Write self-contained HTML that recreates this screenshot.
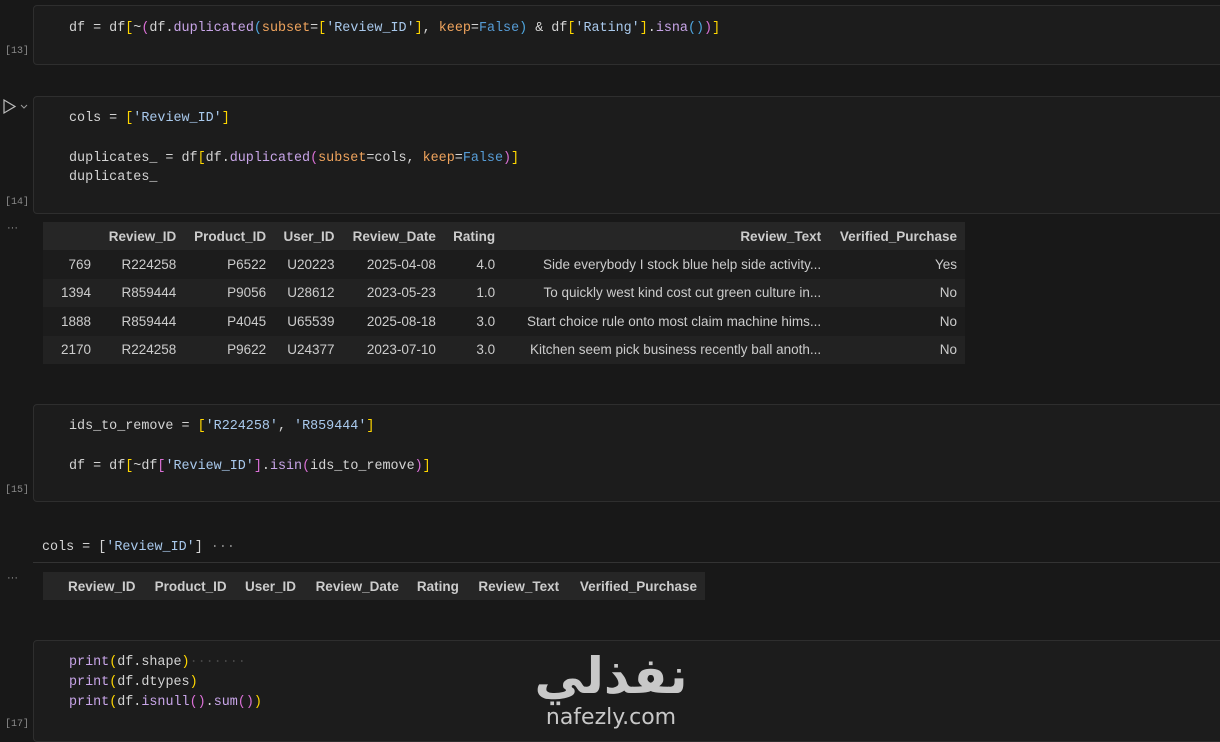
<!DOCTYPE html>
<html><head><meta charset="utf-8"><style>
body{margin:0;width:1220px;height:732px;background:#181818;overflow:hidden;position:relative;font-family:"Liberation Mono",monospace;}
.cell{position:absolute;left:33px;right:-4px;border:1px solid #2e2e2e;border-radius:4px;background:#1c1c1c;}
.code{position:absolute;left:69px;font-size:13.4px;color:#d4d4d4;white-space:pre;line-height:20px;}
.n{position:absolute;left:5px;font-size:10px;color:#8a8a8a;}
.f{color:#c8a5e8}.s{color:#a9c9ec}.k{color:#f0a45d}.b{color:#569cd6}.y{color:#ffd700}.p{color:#da70d6}.q{color:#4fa7e0}
table{position:absolute;border-collapse:collapse;font-family:"Liberation Sans Narrow","Liberation Sans",sans-serif;font-size:13.5px;color:#cccccc;}
td,th{padding:0 8px;text-align:right;white-space:nowrap;}
th{font-weight:bold;height:28px;}
td{height:28.5px;}
.dots{position:absolute;left:7px;color:#999;font-size:11px;font-family:"Liberation Sans",sans-serif;}
</style></head><body>
<div class="cell" style="top:5px;height:58px"></div>
<div class="code" style="top:19px">df = df<span class="y">[</span>~<span class="p">(</span>df.<span class="f">duplicated</span><span class="q">(</span><span class="k">subset</span>=<span class="y">[</span><span class="s">'Review_ID'</span><span class="y">]</span>, <span class="k">keep</span>=<span class="b">False</span><span class="q">)</span> &amp; df<span class="y">[</span><span class="s">'Rating'</span><span class="y">]</span>.<span class="f">isna</span><span class="q">()</span><span class="p">)</span><span class="y">]</span></div>
<div class="n" style="top:46px">[13]</div>

<svg style="position:absolute;left:2px;top:99px" width="30" height="16"><path d="M2 1 L13 7.5 L2 14 Z" fill="none" stroke="#bbb" stroke-width="1.2"/><path d="M19 6 L22 9 L25 6" fill="none" stroke="#999" stroke-width="1"/></svg>
<div class="cell" style="top:96px;height:116px"></div>
<div class="code" style="top:109px">cols = <span class="y">[</span><span class="s">'Review_ID'</span><span class="y">]</span></div>
<div class="code" style="top:149px">duplicates_ = df<span class="y">[</span>df.<span class="f">duplicated</span><span class="p">(</span><span class="k">subset</span>=cols, <span class="k">keep</span>=<span class="b">False</span><span class="p">)</span><span class="y">]</span></div>
<div class="code" style="top:168px">duplicates_</div>
<div class="n" style="top:197px">[14]</div>

<div class="dots" style="top:222px">···</div>
<table style="left:43px;top:222px;width:922px">
<tr style="background:#262626"><th style="width:40px"></th><th>Review_ID</th><th>Product_ID</th><th>User_ID</th><th>Review_Date</th><th>Rating</th><th style="width:310px">Review_Text</th><th>Verified_Purchase</th></tr>
<tr style="background:#1c1c1c"><td>769</td><td>R224258</td><td>P6522</td><td>U20223</td><td>2025-04-08</td><td>4.0</td><td>Side everybody I stock blue help side activity...</td><td>Yes</td></tr>
<tr style="background:#222"><td>1394</td><td>R859444</td><td>P9056</td><td>U28612</td><td>2023-05-23</td><td>1.0</td><td>To quickly west kind cost cut green culture in...</td><td>No</td></tr>
<tr style="background:#1c1c1c"><td>1888</td><td>R859444</td><td>P4045</td><td>U65539</td><td>2025-08-18</td><td>3.0</td><td>Start choice rule onto most claim machine hims...</td><td>No</td></tr>
<tr style="background:#222"><td>2170</td><td>R224258</td><td>P9622</td><td>U24377</td><td>2023-07-10</td><td>3.0</td><td>Kitchen seem pick business recently ball anoth...</td><td>No</td></tr>
</table>

<div class="cell" style="top:404px;height:96px"></div>
<div class="code" style="top:417px">ids_to_remove = <span class="y">[</span><span class="s">'R224258'</span>, <span class="s">'R859444'</span><span class="y">]</span></div>
<div class="code" style="top:457px">df = df<span class="y">[</span>~df<span class="p">[</span><span class="s">'Review_ID'</span><span class="p">]</span>.<span class="f">isin</span><span class="p">(</span>ids_to_remove<span class="p">)</span><span class="y">]</span></div>
<div class="n" style="top:485px">[15]</div>

<div class="code" style="top:538px;left:42px">cols = <span>[</span><span class="s">'Review_ID'</span>] <span style="color:#888">···</span></div>
<div style="position:absolute;left:33px;right:0;top:562px;height:1px;background:#333"></div>
<div class="dots" style="top:572px">···</div>
<table style="left:43px;top:572px;width:662px;background:#262626">
<tr><th style="width:14px;padding:0"></th><th>Review_ID</th><th>Product_ID</th><th>User_ID</th><th>Review_Date</th><th>Rating</th><th>Review_Text</th><th>Verified_Purchase</th></tr>
</table>

<div class="cell" style="top:640px;height:100px"></div>
<div class="code" style="top:653px"><span class="f">print</span><span class="y">(</span>df.shape<span class="y">)</span><span style="color:#444">·······</span></div>
<div class="code" style="top:673px"><span class="f">print</span><span class="y">(</span>df.dtypes<span class="y">)</span></div>
<div class="code" style="top:693px"><span class="f">print</span><span class="y">(</span>df.<span class="f">isnull</span><span class="p">()</span>.<span class="f">sum</span><span class="p">()</span><span class="y">)</span></div>
<div class="n" style="top:719px">[17]</div>

<div style="position:absolute;left:526px;top:646px;width:170px;text-align:center;font-family:'DejaVu Sans','Noto Sans CJK SC',sans-serif;font-weight:bold;font-size:50px;color:#c8c8c8;line-height:60px">نفذلي</div>
<div style="position:absolute;left:526px;top:704px;width:170px;text-align:center;font-family:'DejaVu Sans',sans-serif;font-size:22px;color:#c8c8c8;line-height:28px">nafezly.com</div>
</body></html>
